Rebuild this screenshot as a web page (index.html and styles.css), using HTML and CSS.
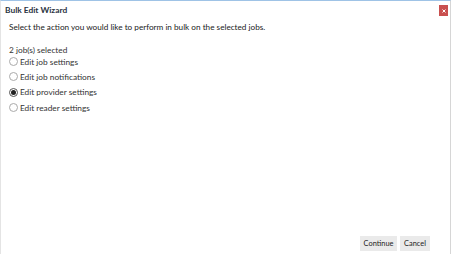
FILE: index.html
```html
<!DOCTYPE html>
<html lang="en">
<head>
    <meta charset="UTF-8">
    <title>Bulk Edit Wizard</title>
    <link rel="stylesheet" href="styles.css">
</head>
<body>

<div class="dialog">
    <div class="titlebar">
        <span class="title">Bulk Edit Wizard</span>
        <button type="button" class="close" aria-label="Close">
            <svg width="4" height="4" viewBox="0 0 4 4"><path d="M0.5 0.5 L3.5 3.5 M3.5 0.5 L0.5 3.5" stroke="#fff" stroke-width="1"/></svg>
        </button>
    </div>

    <div class="content">
        <p class="intro">Select the action you would like to perform in bulk on the selected jobs.</p>

        <p class="count">2 job(s) selected</p>
        <label class="option"><input type="radio" name="action"><span>Edit job settings</span></label>
        <label class="option"><input type="radio" name="action"><span>Edit job notifications</span></label>
        <label class="option"><input type="radio" name="action" checked><span>Edit provider settings</span></label>
        <label class="option"><input type="radio" name="action"><span>Edit reader settings</span></label>
    </div>

    <div class="footer">
        <button type="button" class="btn btn-continue">Continue</button>
        <button type="button" class="btn btn-cancel">Cancel</button>
    </div>
</div>

</body>
</html>
```

FILE: styles.css
```css
/* Global */
body {
    margin: 0;
    background: #fff;
    font-family: 'Lato', sans-serif;
    color: #222;
}

/* Dialog frame */
.dialog {
    width: 449px;
    height: 253px;
    border-top: 1px solid #9fc3e6;
    border-left: 1px solid #e4e4e4;
    border-right: 1px solid #d6d6d6;
    display: flex;
    flex-direction: column;
}

/* Title bar */
.titlebar {
    display: flex;
    align-items: center;
    justify-content: space-between;
    height: 18px;
    padding: 0 2px 0 4px;
}

.title {
    font-size: 8.4px;
    font-weight: 700;
    color: #2a3342;
}

.close {
    width: 9px;
    height: 11px;
    margin-top: 1px;
    padding: 0;
    border: none;
    background: #c9504f;
    display: flex;
    align-items: center;
    justify-content: center;
}

/* Content */
.content {
    flex: 1;
    padding: 0 8px;
}

.intro {
    margin: 3px 0 13px;
    font-size: 8.2px;
    color: #1a1a1a;
}

.count {
    margin: 0 0 -1px;
    font-size: 8.3px;
    color: #333;
}

.option {
    display: flex;
    align-items: center;
    height: 15.3px;
    font-size: 8.3px;
    color: #333;
}

/* Flat radio circles */
.option input {
    appearance: none;
    box-sizing: border-box;
    width: 9px;
    height: 9px;
    margin: 0 2px 0 0;
    border: 1px solid #aaa;
    border-radius: 50%;
    background: #fff;
    display: flex;
    align-items: center;
    justify-content: center;
}

.option input:checked {
    border-color: #555;
}

.option input:checked::after {
    content: "";
    width: 5px;
    height: 5px;
    border-radius: 50%;
    background: #222;
}

/* Footer buttons */
.footer {
    display: flex;
    justify-content: flex-end;
    gap: 3px;
    padding: 0 20px 3px 0;
}

.btn {
    height: 15px;
    padding: 0;
    border: none;
    background: #eaeaea;
    font-family: 'Lato', sans-serif;
    font-size: 7.4px;
    color: #222;
}

.btn-continue {
    width: 37px;
}

.btn-cancel {
    width: 30px;
}
```
